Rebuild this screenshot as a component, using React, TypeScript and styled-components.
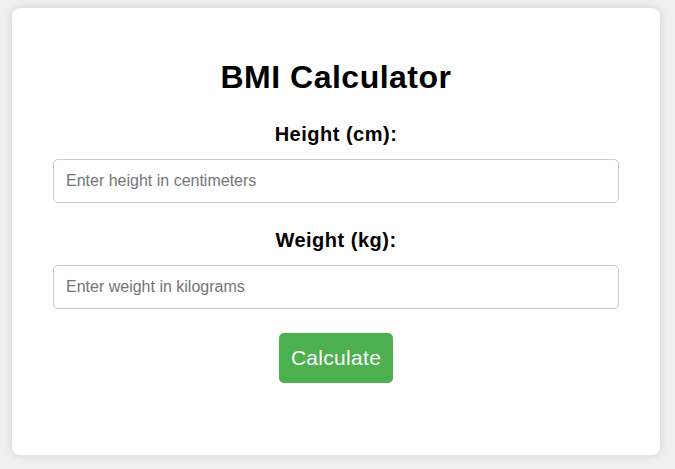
import React from "react";
import styled, { createGlobalStyle } from "styled-components";

const Global = createGlobalStyle`
  html, body { margin: 0; padding: 0; }
  body {
    background: #f0f0f0;
    font-family: Arial, "Liberation Sans", sans-serif;
  }
`;

const Page = styled.div`
  padding: 8px 15px 14px 12px;
`;

const Card = styled.div`
  background: #ffffff;
  border-radius: 8px;
  box-shadow: 0 0 10px rgba(0, 0, 0, 0.12);
  height: 447px;
  box-sizing: border-box;
  padding: 51px 41px 0;
  display: flex;
  flex-direction: column;
  align-items: center;
`;

const Title = styled.h1`
  margin: 0 0 27px;
  font-size: 32px;
  line-height: 37px;
  font-weight: bold;
  letter-spacing: 0.5px;
  color: #000;
`;

const Field = styled.div`
  width: 100%;
  display: flex;
  flex-direction: column;
  align-items: center;
  margin-bottom: ${(p: { $mb: number }) => p.$mb}px;
`;

const Label = styled.label`
  font-size: 20px;
  line-height: 23px;
  font-weight: bold;
  letter-spacing: 0.5px;
  color: #000;
  margin-bottom: 13px;
`;

const Input = styled.input`
  width: 100%;
  height: 44px;
  box-sizing: border-box;
  border: 1px solid #cccccc;
  border-radius: 5px;
  padding: 0 12px;
  font-family: Arial, "Liberation Sans", sans-serif;
  font-size: 16px;
  color: #000;
  &::placeholder { color: #757575; }
`;

const Button = styled.button`
  background: #4caf50;
  color: #fff;
  border: none;
  border-radius: 5px;
  width: 114px;
  height: 50px;
  padding: 0;
  font-family: Arial, "Liberation Sans", sans-serif;
  font-size: 21px;
  letter-spacing: 0.3px;
  cursor: pointer;
`;

export default function App() {
  return (
    <>
      <Global />
      <Page>
        <Card>
          <Title>BMI Calculator</Title>
          <Field $mb={26}>
            <Label>Height (cm):</Label>
            <Input placeholder="Enter height in centimeters" />
          </Field>
          <Field $mb={24}>
            <Label>Weight (kg):</Label>
            <Input placeholder="Enter weight in kilograms" />
          </Field>
          <Button>Calculate</Button>
        </Card>
      </Page>
    </>
  );
}
